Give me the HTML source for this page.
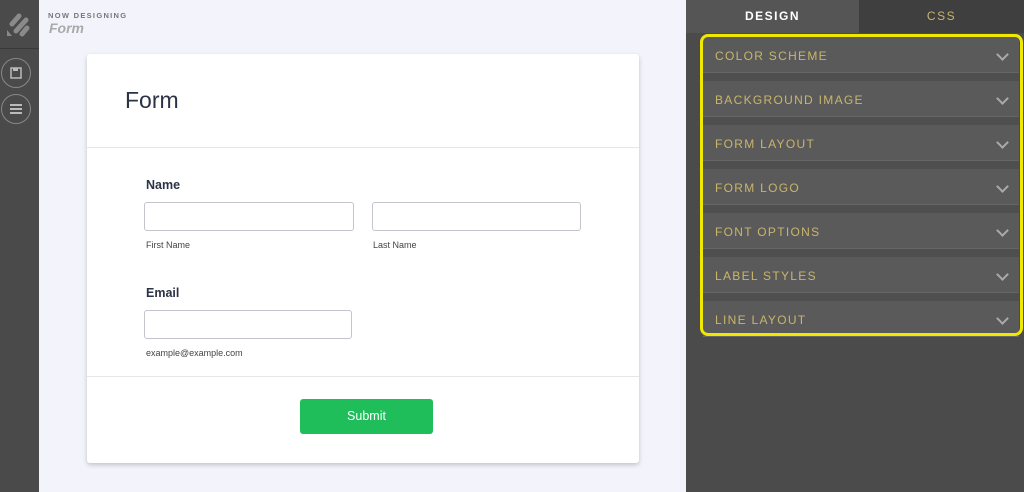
<!DOCTYPE html><html><head><style>
*{box-sizing:border-box;margin:0;padding:0}
body{width:1024px;height:492px;overflow:hidden;font-family:"Liberation Sans",sans-serif;background:#f3f3fb;position:relative}
.abs{position:absolute}
.side{left:0;top:0;width:39px;height:492px;background:#4a4a4a}
.circ{width:30px;height:30px;border:1px solid #888;border-radius:50%;left:1px;display:flex;align-items:center;justify-content:center}
.card{left:87px;top:54px;width:552px;height:409px;background:#fff;box-shadow:0 2px 5px rgba(0,0,0,.2);border-radius:3px}
.inp{border:1px solid #c4c4cc;border-radius:3px;height:29px;background:#fff}
.lbl{font-size:12.5px;font-weight:bold;color:#2c3345}
.sub{font-size:9px;color:#444}
.panel{left:686px;top:0;width:338px;height:492px;background:#4b4b4b}
.item{left:703px;width:316px;height:36px;background:#5a5a5a;color:#c9b56a;font-size:12px;letter-spacing:1.3px;padding:12px 0 0 12px;border-bottom:1px solid #666}
.item:after{content:"";position:absolute;right:12px;top:13px;width:7px;height:7px;border-right:2px solid #aaa;border-bottom:2px solid #aaa;transform:rotate(45deg)}
.strip{left:703px;width:316px;height:8px;background:#4f4f4f}
</style></head><body>
<div class="abs side">
<svg class="abs" style="left:6px;top:12px" width="24" height="26"><g stroke="#8a8a8a" stroke-width="5" stroke-linecap="round"><line x1="6" y1="12" x2="13" y2="4"/><line x1="10" y1="19" x2="20" y2="8"/><line x1="16" y1="22" x2="21" y2="16"/></g><path d="M1 18 L6 24 L1 24Z" fill="#8a8a8a"/></svg>
<div class="abs" style="left:0;top:48px;width:39px;height:1px;background:#3a3a3a"></div>
<div class="abs circ" style="top:58px"><svg width="12" height="12"><rect x="1" y="1" width="10" height="10" fill="none" stroke="#bbb" stroke-width="1.5"/><rect x="3" y="1" width="5" height="3" fill="#bbb"/></svg></div>
<div class="abs circ" style="top:94px"><svg width="12" height="10"><g stroke="#bbb" stroke-width="2"><line x1="0" y1="1" x2="12" y2="1"/><line x1="0" y1="5" x2="12" y2="5"/><line x1="0" y1="9" x2="12" y2="9"/></g></svg></div>
</div>
<div class="abs" style="left:48px;top:11px;font-size:7.5px;letter-spacing:1.3px;font-weight:bold;color:#777">NOW DESIGNING</div>
<div class="abs" style="left:49px;top:20px;font-size:14px;font-style:italic;font-weight:bold;color:#aaa">Form</div>
<div class="abs card">
<div class="abs" style="left:38px;top:33px;font-size:23px;color:#2c3345">Form</div>
<div class="abs" style="left:0;top:93px;width:552px;height:1px;background:#e6e6ea"></div>
<div class="abs lbl" style="left:59px;top:124px">Name</div>
<div class="abs inp" style="left:57px;top:148px;width:210px"></div>
<div class="abs inp" style="left:285px;top:148px;width:209px"></div>
<div class="abs sub" style="left:59px;top:186px">First Name</div>
<div class="abs sub" style="left:286px;top:186px">Last Name</div>
<div class="abs lbl" style="left:59px;top:232px">Email</div>
<div class="abs inp" style="left:57px;top:256px;width:208px"></div>
<div class="abs sub" style="left:59px;top:294px">example@example.com</div>
<div class="abs" style="left:0;top:322px;width:552px;height:1px;background:#e6e6ea"></div>
<div class="abs" style="left:213px;top:345px;width:133px;height:35px;background:#1fbe5a;border-radius:3px;color:#fff;font-size:12.5px;text-align:center;line-height:35px">Submit</div>
</div>
<div class="abs panel">
<div class="abs" style="left:0;top:0;width:173px;height:33px;background:#555;color:#fff;font-weight:bold;font-size:12px;letter-spacing:1.5px;text-align:center;line-height:33px">DESIGN</div>
<div class="abs" style="left:173px;top:0;width:165px;height:33px;background:#3f3f3f;color:#c9b56a;font-size:12px;letter-spacing:1.5px;text-align:center;line-height:33px">CSS</div>
</div>
<div class="abs item" style="top:37px">COLOR SCHEME</div><div class="abs strip" style="top:73px"></div>
<div class="abs item" style="top:81px">BACKGROUND IMAGE</div><div class="abs strip" style="top:117px"></div>
<div class="abs item" style="top:125px">FORM LAYOUT</div><div class="abs strip" style="top:161px"></div>
<div class="abs item" style="top:169px">FORM LOGO</div><div class="abs strip" style="top:205px"></div>
<div class="abs item" style="top:213px">FONT OPTIONS</div><div class="abs strip" style="top:249px"></div>
<div class="abs item" style="top:257px">LABEL STYLES</div><div class="abs strip" style="top:293px"></div>
<div class="abs item" style="top:301px">LINE LAYOUT</div>
<div class="abs" style="left:700px;top:34px;width:323px;height:302px;border:3px solid #f0e800;border-radius:8px"></div>
</body></html>
